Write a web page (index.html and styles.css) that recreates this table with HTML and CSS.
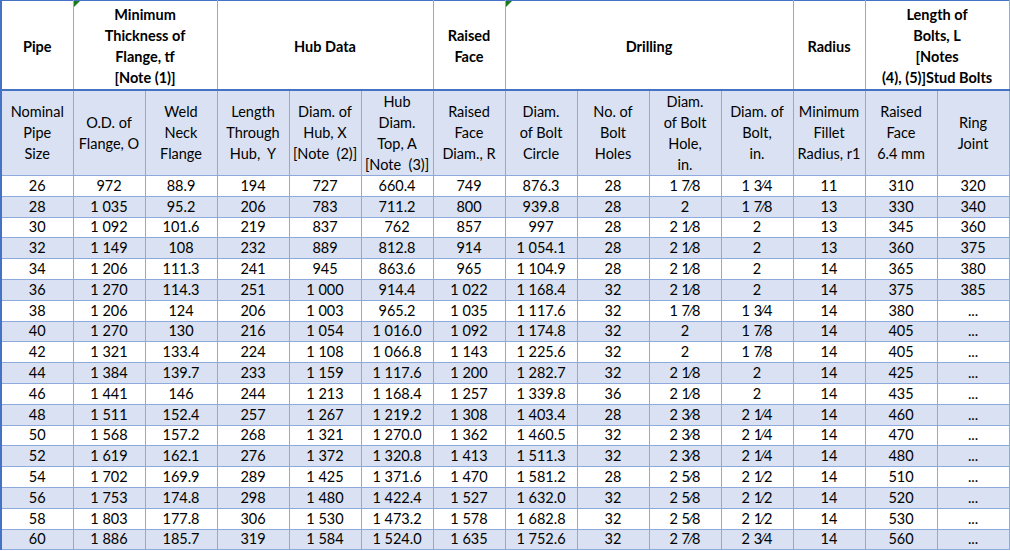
FILE: index.html
```html
<!DOCTYPE html>
<html>
<head>
<meta charset="utf-8">
<link rel="stylesheet" href="styles.css">
</head>
<body>
<table class="sheet">
<colgroup>
<col class="c"><col class="c"><col class="c"><col class="c"><col class="c"><col class="c"><col class="c"><col class="c"><col class="c"><col class="c"><col class="c"><col class="c"><col class="c"><col class="c">
</colgroup>
<thead>
<tr class="h1">
<th class="first">Pipe</th>
<th colspan="2" class="flag">Minimum<br>Thickness of<br>Flange, tf<br>[Note (1)]<span class="tri"></span></th>
<th colspan="3">Hub Data</th>
<th>Raised<br>Face</th>
<th colspan="4" class="flag">Drilling<span class="tri"></span></th>
<th>Radius</th>
<th colspan="2">Length of<br>Bolts, L<br>[Notes<br>(4), (5)]Stud Bolts</th>
</tr>
<tr class="h2">
<td class="first">Nominal<br>Pipe<br>Size</td>
<td>O.D. of<br>Flange, O</td>
<td>Weld<br>Neck<br>Flange</td>
<td>Length<br>Through<br>Hub,&nbsp; Y</td>
<td>Diam. of<br>Hub, X<br>[Note&nbsp; (2)]</td>
<td>Hub<br>Diam.<br>Top, A<br>[Note&nbsp; (3)]</td>
<td>Raised<br>Face<br>Diam., R</td>
<td>Diam.<br>of Bolt<br>Circle</td>
<td>No. of<br>Bolt<br>Holes</td>
<td>Diam.<br>of Bolt<br>Hole,<br>in.</td>
<td>Diam. of<br>Bolt,<br>in.</td>
<td>Minimum<br>Fillet<br>Radius, r1</td>
<td>Raised<br>Face<br>6.4 mm</td>
<td>Ring<br>Joint</td>
</tr>
</thead>
<tbody>
<tr><td class="first">26</td><td>972</td><td>88.9</td><td>194</td><td>727</td><td>660.4</td><td>749</td><td>876.3</td><td>28</td><td>1 7⁄8</td><td>1 3⁄4</td><td>11</td><td>310</td><td>320</td></tr>
<tr class="alt"><td class="first">28</td><td>1 035</td><td>95.2</td><td>206</td><td>783</td><td>711.2</td><td>800</td><td>939.8</td><td>28</td><td>2</td><td>1 7⁄8</td><td>13</td><td>330</td><td>340</td></tr>
<tr><td class="first">30</td><td>1 092</td><td>101.6</td><td>219</td><td>837</td><td>762</td><td>857</td><td>997</td><td>28</td><td>2 1⁄8</td><td>2</td><td>13</td><td>345</td><td>360</td></tr>
<tr class="alt"><td class="first">32</td><td>1 149</td><td>108</td><td>232</td><td>889</td><td>812.8</td><td>914</td><td>1 054.1</td><td>28</td><td>2 1⁄8</td><td>2</td><td>13</td><td>360</td><td>375</td></tr>
<tr><td class="first">34</td><td>1 206</td><td>111.3</td><td>241</td><td>945</td><td>863.6</td><td>965</td><td>1 104.9</td><td>28</td><td>2 1⁄8</td><td>2</td><td>14</td><td>365</td><td>380</td></tr>
<tr class="alt"><td class="first">36</td><td>1 270</td><td>114.3</td><td>251</td><td>1 000</td><td>914.4</td><td>1 022</td><td>1 168.4</td><td>32</td><td>2 1⁄8</td><td>2</td><td>14</td><td>375</td><td>385</td></tr>
<tr><td class="first">38</td><td>1 206</td><td>124</td><td>206</td><td>1 003</td><td>965.2</td><td>1 035</td><td>1 117.6</td><td>32</td><td>1 7⁄8</td><td>1 3⁄4</td><td>14</td><td>380</td><td>...</td></tr>
<tr class="alt"><td class="first">40</td><td>1 270</td><td>130</td><td>216</td><td>1 054</td><td>1 016.0</td><td>1 092</td><td>1 174.8</td><td>32</td><td>2</td><td>1 7⁄8</td><td>14</td><td>405</td><td>...</td></tr>
<tr><td class="first">42</td><td>1 321</td><td>133.4</td><td>224</td><td>1 108</td><td>1 066.8</td><td>1 143</td><td>1 225.6</td><td>32</td><td>2</td><td>1 7⁄8</td><td>14</td><td>405</td><td>...</td></tr>
<tr class="alt"><td class="first">44</td><td>1 384</td><td>139.7</td><td>233</td><td>1 159</td><td>1 117.6</td><td>1 200</td><td>1 282.7</td><td>32</td><td>2 1⁄8</td><td>2</td><td>14</td><td>425</td><td>...</td></tr>
<tr><td class="first">46</td><td>1 441</td><td>146</td><td>244</td><td>1 213</td><td>1 168.4</td><td>1 257</td><td>1 339.8</td><td>36</td><td>2 1⁄8</td><td>2</td><td>14</td><td>435</td><td>...</td></tr>
<tr class="alt"><td class="first">48</td><td>1 511</td><td>152.4</td><td>257</td><td>1 267</td><td>1 219.2</td><td>1 308</td><td>1 403.4</td><td>28</td><td>2 3⁄8</td><td>2 1⁄4</td><td>14</td><td>460</td><td>...</td></tr>
<tr><td class="first">50</td><td>1 568</td><td>157.2</td><td>268</td><td>1 321</td><td>1 270.0</td><td>1 362</td><td>1 460.5</td><td>32</td><td>2 3⁄8</td><td>2 1⁄4</td><td>14</td><td>470</td><td>...</td></tr>
<tr class="alt"><td class="first">52</td><td>1 619</td><td>162.1</td><td>276</td><td>1 372</td><td>1 320.8</td><td>1 413</td><td>1 511.3</td><td>32</td><td>2 3⁄8</td><td>2 1⁄4</td><td>14</td><td>480</td><td>...</td></tr>
<tr><td class="first">54</td><td>1 702</td><td>169.9</td><td>289</td><td>1 425</td><td>1 371.6</td><td>1 470</td><td>1 581.2</td><td>28</td><td>2 5⁄8</td><td>2 1⁄2</td><td>14</td><td>510</td><td>...</td></tr>
<tr class="alt"><td class="first">56</td><td>1 753</td><td>174.8</td><td>298</td><td>1 480</td><td>1 422.4</td><td>1 527</td><td>1 632.0</td><td>32</td><td>2 5⁄8</td><td>2 1⁄2</td><td>14</td><td>520</td><td>...</td></tr>
<tr><td class="first">58</td><td>1 803</td><td>177.8</td><td>306</td><td>1 530</td><td>1 473.2</td><td>1 578</td><td>1 682.8</td><td>32</td><td>2 5⁄8</td><td>2 1⁄2</td><td>14</td><td>530</td><td>...</td></tr>
<tr class="alt"><td class="first">60</td><td>1 886</td><td>185.7</td><td>319</td><td>1 584</td><td>1 524.0</td><td>1 635</td><td>1 752.6</td><td>32</td><td>2 7⁄8</td><td>2 3⁄4</td><td>14</td><td>560</td><td>...</td></tr>
</tbody>
</table>
</body>
</html>
```
FILE: styles.css
```css
html, body {
  margin: 0;
  padding: 0;
  background: #ffffff;
}
.sheet {
  border-collapse: collapse;
  table-layout: fixed;
  width: 1009px;
  font-family: Lato, "Liberation Sans", sans-serif;
  font-size: 14.5px;
  color: #000;
  font-feature-settings: "numr" 0, "dnom" 0, "frac" 0;
}
.c {
  width: 72px;
}
.sheet th,
.sheet td {
  border: 1px solid #8ea9db;
  padding: 0 1px;
  text-align: center;
  vertical-align: middle;
  white-space: nowrap;
  line-height: 21px;
}
.sheet th {
  font-weight: bold;
  border-top: 1px solid #4472c4;
  border-bottom: 2px solid #4472c4;
  background: #fff;
  padding-top: 3px;
}
.h1 {
  height: 89px;
}
.h2 {
  height: 86px;
}
.h2 td {
  background: #d9e1f2;
}
.sheet tbody tr {
  height: 20.8px;
}
.sheet tbody td {
  line-height: 18px;
}
.sheet tr.alt td {
  background: #d9e1f2;
}
.sheet .first {
  border-left: 2px solid #4472c4;
}
.flag {
  position: relative;
}
.tri {
  position: absolute;
  left: 0;
  top: 0;
  width: 0;
  height: 0;
  border-top: 6px solid #1e7a1e;
  border-right: 6px solid transparent;
}
```
